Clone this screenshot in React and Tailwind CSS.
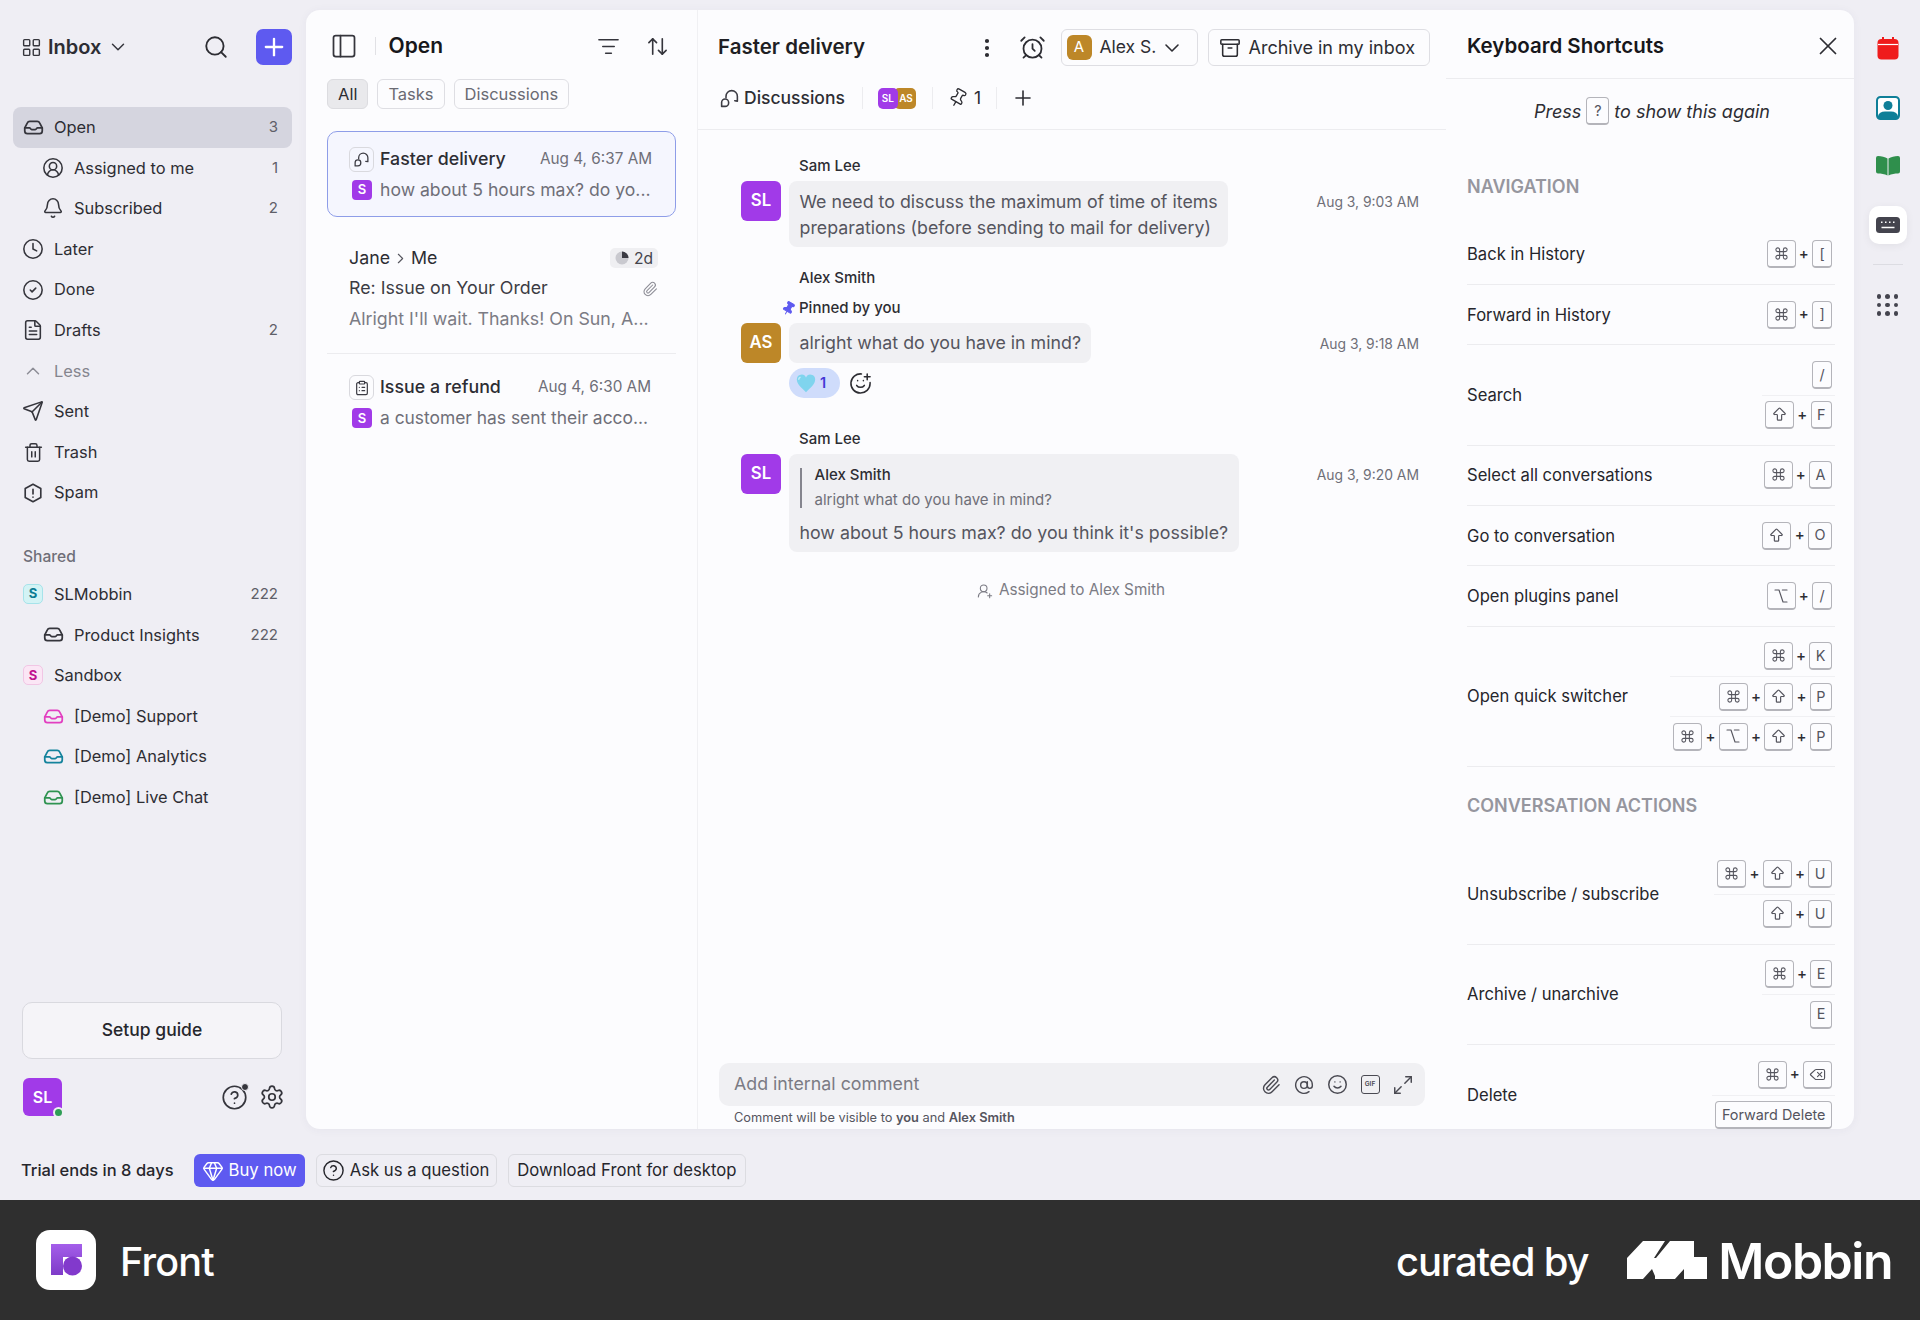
import React from 'react';
import {
    LayoutGrid, ChevronDown, ChevronUp, ChevronRight, Search, Plus, CircleUserRound, Bell, Clock, CircleCheck,
    FileText, Send, Trash2, PanelLeft, ListFilter, ArrowUpDown, ClipboardList, Paperclip, EllipsisVertical,
    AlarmClock, Archive, Pin, SmilePlus, Smile, AtSign, Maximize2, UserRoundPlus, CircleHelp, Settings, Gem, X,
    Command, ArrowBigUp, Option, Delete,
} from 'lucide-react';

const InboxIcon = ({ size = 21, className = '' }) => (
    <svg width={size} height={size} viewBox="0 0 24 24" fill="none" stroke="currentColor" strokeWidth="2" strokeLinejoin="round" strokeLinecap="round" className={className}>
        <path d="M2 12.5 5 6.8A3 3 0 0 1 7.7 5h8.6A3 3 0 0 1 19 6.8l3 5.7V16a3 3 0 0 1-3 3H5a3 3 0 0 1-3-3z" />
        <path d="M2 12.5h5.5c.8 0 1.2 1.8 2.5 1.8h4c1.3 0 1.7-1.8 2.5-1.8H22" />
    </svg>
);

const HexAlert = ({ size = 22 }) => (
    <svg width={size} height={size} viewBox="0 0 24 24" fill="none" stroke="currentColor" strokeWidth="1.8" strokeLinejoin="round" strokeLinecap="round">
        <path d="M12 2.5 20.500 7v10L12 21.500 3.500 17V7z" />
        <path d="M12 8v5M12 16.500v.1" />
    </svg>
);

const DiscussionIcon = ({ size = 18 }) => (
    <svg width={size} height={size} viewBox="0 0 24 24" fill="none" stroke="currentColor" strokeWidth="1.8" strokeLinejoin="round" strokeLinecap="round">
        <path d="M8 11V9.500a6.500 6.500 0 0 1 13 0V15l-3-.5" />
        <path d="M3 21v-4.500a4 4 0 0 1 8 0V17a4 4 0 0 1-4 4z" />
    </svg>
);

const HeartIcon = () => (
    <svg width="22" height="22" viewBox="0 0 24 24">
        <path d="M12 22C6 16.500 2 13 2 8a5.200 5.200 0 0 1 10-2 5.200 5.200 0 0 1 10 2c0 5-4 8.500-10 14z" fill="#7fd4ee" />
        <path d="M6 5.500a3 3 0 0 0-2 3" stroke="#c4eefa" strokeWidth="1.500" fill="none" />
    </svg>
);

const Pie = () => (
    <svg width="14" height="14" viewBox="0 0 14 14">
        <circle cx="7" cy="7" r="6.500" fill="#c9c9cf" />
        <path d="M7 7V.5A6.500 6.500 0 0 1 13.500 7z" fill="#3a3a42" />
    </svg>
);

const GifIcon = () => (
    <span className="flex h-[19px] w-[19px] items-center justify-center rounded-[3px] border-[1.500px] border-[#4a4a52] text-[6.500px] font-semibold leading-none text-[#4a4a52]">GIF</span>
);

const FrontMark = () => (
    <svg width="60" height="60" viewBox="0 0 60 60">
        <defs>
            <linearGradient id="frontGrad" x1="0" y1="0" x2="0" y2="1">
                <stop offset="0" stopColor="#a45eea" />
                <stop offset="1" stopColor="#7e3bc8" />
            </linearGradient>
        </defs>
        <path d="M15 14h31v13H27v18H15z" fill="url(#frontGrad)" />
        <circle cx="36.500" cy="36" r="9.500" fill="#8239cc" />
    </svg>
);

const MobbinMark = () => (
    <svg width="80" height="38" viewBox="0 0 80 38" fill="#fff">
        <path d="M0 38V17L16 0h22L27 17l2 0 14-17h24v16h13v22H57V28l-9 10H28v-3l-3-7-9 10z" />
    </svg>
);

const CalendarIcon = () => (
    <svg width="22" height="24" viewBox="0 0 22 24">
        <rect x="0.500" y="3" width="21" height="20.500" rx="4" fill="#ef1c1c" />
        <path d="M1 8.500h20" stroke="#fff" strokeWidth="1.200" />
        <path d="M6 1v4M16 1v4" stroke="#ef1c1c" strokeWidth="2" />
    </svg>
);

const ContactIcon = () => (
    <svg width="24" height="24" viewBox="0 0 24 24">
        <rect x="1" y="1" width="22" height="22" rx="3.500" fill="#fff" stroke="#0f7f98" strokeWidth="2" />
        <circle cx="12" cy="9.500" r="4.500" fill="#0f7f98" />
        <path d="M2 23v-3a7 5 0 0 1 7-4.500h6a7 5 0 0 1 7 4.500v3z" fill="#0f7f98" />
    </svg>
);

const BookIcon = () => (
    <svg width="24" height="20" viewBox="0 0 24 20" fill="#2f8f4c">
        <path d="M11.500 2.500v17c-3-1.500-6.500-2-9.500-2a2 2 0 0 1-2-2V2a2 2 0 0 1 2-2c3.500 0 7 1 9.500 2.500z" />
        <path d="M12.500 2.500v17c3-1.500 6.500-2 9.500-2a2 2 0 0 0 2-2V2a2 2 0 0 0-2-2c-3.500 0-7 1-9.500 2.500z" />
    </svg>
);

const KeyboardIcon = () => (
    <svg width="24" height="16" viewBox="0 0 24 16">
        <rect width="24" height="16" rx="3.500" fill="#44444e" />
        <path d="M5 5.200h1.500M9 5.200h1.500M13 5.200h1.500M17 5.200h1.500" stroke="#fff" strokeWidth="1.400" />
        <path d="M5.500 10.500h13" stroke="#fff" strokeWidth="1.500" />
    </svg>
);

const DotsGrid = () => (
    <div className="grid grid-cols-3 gap-[4px]">
        {Array.from({ length: 9 }).map((_, i) => (
            <span key={i} className="h-[4.500px] w-[4.500px] rounded-full bg-[#44444e]"></span>
        ))}
    </div>
);

const mainNav = [
    { label: 'Open', icon: <InboxIcon />, count: 3, active: true },
    { label: 'Assigned to me', icon: <CircleUserRound size={22} strokeWidth={1.7} />, count: 1, sub: true },
    { label: 'Subscribed', icon: <Bell size={22} strokeWidth={1.7} />, count: 2, sub: true },
    { label: 'Later', icon: <Clock size={22} strokeWidth={1.7} /> },
    { label: 'Done', icon: <CircleCheck size={22} strokeWidth={1.7} /> },
    { label: 'Drafts', icon: <FileText size={22} strokeWidth={1.7} />, count: 2 },
    { label: 'Less', icon: <ChevronUp size={24} strokeWidth={1.6} />, muted: true },
    { label: 'Sent', icon: <Send size={22} strokeWidth={1.7} /> },
    { label: 'Trash', icon: <Trash2 size={21} strokeWidth={1.7} /> },
    { label: 'Spam', icon: <HexAlert /> },
];

const NavRow = ({ item }) => (
    <div className={`flex h-[40.600px] items-center rounded-lg pr-[14px] ${item.active ? 'bg-[#d5d5df]' : ''} ${item.sub ? 'pl-[29px]' : 'pl-[9px]'}`}>
        <span className={`flex w-[22px] shrink-0 justify-center ${item.muted ? 'text-[#8d8d96]' : item.color || 'text-[#35353c]'}`}>{item.icon}</span>
        <span className={`ml-[10px] flex-1 text-[16.400px] ${item.muted ? 'text-[#85858e]' : 'text-[#2d2d33]'}`}>{item.label}</span>
        {item.count && <span className="text-[15px] text-[#5f5f68]">{item.count}</span>}
    </div>
);

const SharedBadge = ({ className }) => (
    <span className={`flex h-[20px] w-[20px] items-center justify-center rounded-[5px] border text-[13px] font-bold ${className}`}>S</span>
);

const Sidebar = () => (
    <aside className="flex w-[306px] shrink-0 flex-col pl-[13px] pr-[14px]">
        <div className="flex h-[36px] mt-[29px] items-center pl-[8px]">
            <LayoutGrid size={21} strokeWidth={1.6} className="text-[#35353c]" />
            <span className="ml-[6px] text-[20px] font-semibold text-[#2d2d33]">Inbox</span>
            <ChevronDown size={22} strokeWidth={1.6} className="ml-[6px] text-[#35353c]" />
            <Search size={26} strokeWidth={1.7} className="ml-auto mr-[27px] text-[#2d2d33]" />
            <span className="flex h-[36px] w-[36px] items-center justify-center rounded-[7px] bg-[#5e5af0] text-white">
                <Plus size={28} strokeWidth={2} />
            </span>
        </div>
        <nav className="mt-[42px]">
            {mainNav.map((item) => <NavRow key={item.label} item={item} />)}
        </nav>
        <p className="ml-[10px] mt-[34px] text-[15.600px] font-medium leading-[20px] text-[#6f6f78]">Shared</p>
        <div className="mt-[7px]">
            <NavRow item={{ label: 'SLMobbin', icon: <SharedBadge className="border-[#a6e3ea] bg-[#d3f3f5] text-[#0d7c93]" />, count: 222 }} />
            <NavRow item={{ label: 'Product Insights', icon: <InboxIcon />, count: 222, sub: true }} />
            <NavRow item={{ label: 'Sandbox', icon: <SharedBadge className="border-[#f1c6e4] bg-[#fbe6f5] text-[#c0128f]" /> }} />
            <NavRow item={{ label: '[Demo] Support', icon: <InboxIcon />, sub: true, color: 'text-[#e23fc0]' }} />
            <NavRow item={{ label: '[Demo] Analytics', icon: <InboxIcon />, sub: true, color: 'text-[#14839c]' }} />
            <NavRow item={{ label: '[Demo] Live Chat', icon: <InboxIcon />, sub: true, color: 'text-[#2f9351]' }} />
        </div>
        <div className="mt-auto ml-[9px] mr-[10px] flex h-[57px] items-center justify-center rounded-[10px] border-[1.500px] border-[#d9d9df] bg-[#f5f4f8] text-[17.500px] font-medium text-[#26262c]">
            Setup guide
        </div>
        <div className="ml-[10px] mr-[7px] mb-[13px] mt-[19px] flex items-center">
            <span className="relative flex h-[38px] w-[39px] items-center justify-center rounded-[6px] bg-[#a13ae8] text-[16px] font-semibold text-white">
                SL
                <span className="absolute -bottom-[2px] -right-[2px] h-[11px] w-[11px] rounded-full border-2 border-[#efeef4] bg-[#2f9e56]"></span>
            </span>
            <span className="relative ml-auto mr-[11px] text-[#35353c]">
                <CircleHelp size={27} strokeWidth={1.5} />
                <span className="absolute -right-[1px] -top-[1px] h-[8px] w-[8px] rounded-full border border-[#efeef4] bg-[#35353c]"></span>
            </span>
            <Settings size={26} strokeWidth={1.6} className="text-[#35353c]" />
        </div>
    </aside>
);

const Chip = ({ label, active }) => (
    <span className={`flex h-[30px] items-center rounded-[6px] border-[1.500px] px-[10px] text-[16.500px] ${active ? 'border-[#dcdce0] bg-[#e9e9ec] text-[#2d2d33]' : 'border-[#dedee3] text-[#6a6a73]'}`}>{label}</span>
);

const IconBox = ({ children }) => (
    <span className="flex h-[25px] w-[25px] shrink-0 items-center justify-center rounded-[6px] border border-[#d9d9de] text-[#3c3c44]">{children}</span>
);

const PurpleS = () => (
    <span className="ml-[3px] mr-[8px] flex h-[20px] w-[20px] shrink-0 items-center justify-center rounded-[4px] bg-[#a13ae8] text-[13px] font-semibold text-white">S</span>
);

const ConversationList = () => (
    <section className="flex w-[392px] shrink-0 flex-col border-r border-[#f0f0f3] px-[21px]">
        <div className="flex h-[69px] items-center pl-[2.500px] pr-[7.500px] pt-[3px]">
            <PanelLeft size={28} strokeWidth={1.5} className="text-[#35353c]" />
            <span className="ml-[17px] mr-[13px] h-[18px] w-px bg-[#e1e1e5]"></span>
            <span className="text-[21px] font-semibold text-[#17171b]">Open</span>
            <ListFilter size={23} strokeWidth={1.6} className="ml-auto mr-[26px] text-[#35353c]" />
            <ArrowUpDown size={23} strokeWidth={1.7} className="text-[#35353c]" />
        </div>
        <div className="flex gap-[9px]">
            <Chip label="All" active />
            <Chip label="Tasks" />
            <Chip label="Discussions" />
        </div>
        <div className="mt-[22px] h-[86px] rounded-[10px] border-[1.500px] border-[#8e9de8] bg-[#f5f6fe] pl-[21px] pr-[21px] pt-[12px]">
            <div className="flex h-[30.500px] items-center pr-[2px]">
                <IconBox><DiscussionIcon size={17} /></IconBox>
                <span className="ml-[6px] flex-1 text-[17.800px] font-medium text-[#2d2d33]">Faster delivery</span>
                <span className="text-[15.300px] text-[#6f6f78]">Aug 4, 6:37 AM</span>
            </div>
            <div className="flex h-[30.500px] items-center">
                <PurpleS />
                <span className="whitespace-nowrap text-[17.600px] text-[#6f6f78]">how about 5 hours max? do yo...</span>
            </div>
        </div>
        <div className="border-b border-[#ececef] pb-[18px] pl-[22px] pr-[18px] pt-[26px]">
            <div className="flex h-[30.500px] items-center text-[17.800px] text-[#2d2d33]">
                <span>Jane</span>
                <ChevronRight size={17} strokeWidth={1.6} className="mx-[2px] text-[#55555d]" />
                <span className="flex-1">Me</span>
                <span className="flex h-[20px] items-center gap-[5px] rounded-[5px] bg-[#efeff2] px-[5px] text-[15.600px] text-[#44444c]"><Pie />2d</span>
            </div>
            <div className="flex h-[30.500px] items-center justify-between text-[17.800px] text-[#3c3c44]">
                <span>Re: Issue on Your Order</span>
                <Paperclip size={16} strokeWidth={1.6} className="text-[#8d8d96]" />
            </div>
            <div className="flex h-[30.500px] items-center text-[17.800px] text-[#7b7b84]">
                <span className="whitespace-nowrap">Alright I'll wait. Thanks! On Sun, A...</span>
            </div>
        </div>
        <div className="pl-[22px] pr-[22px] pt-[19px]">
            <div className="flex h-[30.500px] items-center pr-[3px]">
                <IconBox><ClipboardList size={16} strokeWidth={1.8} /></IconBox>
                <span className="ml-[6px] flex-1 text-[17.800px] font-medium text-[#2d2d33]">Issue a refund</span>
                <span className="text-[15.300px] text-[#6f6f78]">Aug 4, 6:30 AM</span>
            </div>
            <div className="flex h-[30.500px] items-center">
                <PurpleS />
                <span className="whitespace-nowrap text-[17.400px] text-[#6f6f78]">a customer has sent their acco...</span>
            </div>
        </div>
    </section>
);

const Avatar = ({ initials, bg }) => (
    <span className={`flex h-[40px] w-[40px] shrink-0 items-center justify-center rounded-[6px] text-[16.800px] font-semibold text-white ${bg}`}>{initials}</span>
);

const MessageDate = ({ children }) => (
    <span className="ml-auto flex h-[40px] items-center pt-[2px] text-[13.900px] text-[#6f6f78]">{children}</span>
);

const Name = ({ children }) => (
    <p className="pl-[58px] text-[15px] font-medium leading-[20px] text-[#2d2d33]">{children}</p>
);

const Bubble = ({ children, className = '' }) => (
    <div className={`ml-[8px] rounded-[8px] bg-[#f0f0f3] text-[17.800px] leading-[26px] text-[#55555e] ${className}`}>{children}</div>
);

const DetailDivider = () => <span className="block h-[22px] w-px bg-[#ececef]"></span>;

const ConversationPane = () => (
    <section className="flex w-[748px] shrink-0 flex-col">
        <div className="h-[120px] border-b border-[#ececef] pl-[20px] pr-[16px] pt-[19px]">
            <div className="flex h-[37px] items-center">
                <span className="w-[257px] shrink-0 whitespace-nowrap text-[20.500px] font-semibold text-[#1f1f24]">Faster delivery</span>
                <EllipsisVertical size={24} strokeWidth={2.2} className="shrink-0 text-[#2d2d33]" />
                <AlarmClock size={27} strokeWidth={1.6} className="ml-[20px] shrink-0 text-[#2d2d33]" />
                <span className="ml-[15px] flex h-[37px] w-[137px] shrink-0 items-center rounded-[6px] border-[1.500px] border-[#dedee3] pl-[4.500px]">
                    <span className="flex h-[25px] w-[25px] items-center justify-center rounded-[6px] bg-[#bd8728] text-[15px] text-white">A</span>
                    <span className="ml-[8px] text-[17.500px] text-[#2d2d33]">Alex S.</span>
                    <ChevronDown size={24} strokeWidth={1.6} className="ml-[4px] text-[#2d2d33]" />
                </span>
                <span className="ml-[10px] flex h-[37px] w-[222px] shrink-0 items-center rounded-[6px] border-[1.500px] border-[#dedee3] pl-[9.500px]">
                    <Archive size={22} strokeWidth={1.7} className="text-[#2d2d33]" />
                    <span className="ml-[8px] text-[18px] text-[#2d2d33]">Archive in my inbox</span>
                </span>
            </div>
            <div className="mt-[21px] flex h-[22px] items-center">
                <span className="ml-[1px] text-[#3c3c44]"><DiscussionIcon size={21} /></span>
                <span className="ml-[4px] text-[17.500px] font-medium text-[#2d2d33]">Discussions</span>
                <span className="ml-[17px]"><DetailDivider /></span>
                <span className="relative ml-[15px] flex h-[21px] w-[38px]">
                    <span className="absolute left-[16px] flex h-[21px] w-[22px] items-center justify-end rounded-[5px] bg-[#bd8728] pr-[3px] text-[10px] font-semibold text-white">AS</span>
                    <span className="absolute left-0 flex h-[21px] w-[20px] items-center justify-center rounded-[5px] bg-[#a13ae8] text-[10px] font-semibold text-white">SL</span>
                </span>
                <span className="ml-[16px]"><DetailDivider /></span>
                <Pin size={20} strokeWidth={1.6} className="ml-[15px] rotate-[30deg] text-[#2d2d33]" />
                <span className="ml-[6px] text-[17.500px] text-[#2d2d33]">1</span>
                <span className="ml-[15px]"><DetailDivider /></span>
                <Plus size={24} strokeWidth={1.6} className="ml-[14px] text-[#2d2d33]" />
            </div>
        </div>
        <div className="pl-[43px] pr-[27px] pt-[26px]">
            <Name>Sam Lee</Name>
            <div className="mt-[5px] flex items-start">
                <Avatar initials="SL" bg="bg-[#a13ae8]" />
                <Bubble className="px-[10.500px] pb-[6px] pt-[8px]">
                    We need to discuss the maximum of time of items<br />preparations (before sending to mail for delivery)
                </Bubble>
                <MessageDate>Aug 3, 9:03 AM</MessageDate>
            </div>
            <div className="mt-[21px]">
                <Name>Alex Smith</Name>
            </div>
            <div className="mt-[10px] flex h-[20px] items-center pl-[40px]">
                <Pin size={15} fill="#5e5af0" strokeWidth={1.5} className="rotate-[30deg] text-[#5e5af0]" />
                <span className="ml-[3px] text-[15px] font-medium text-[#2d2d33]">Pinned by you</span>
            </div>
            <div className="mt-[5px] flex items-start">
                <Avatar initials="AS" bg="bg-[#bd8728]" />
                <Bubble className="px-[10.500px] py-[7px]">alright what do you have in mind?</Bubble>
                <MessageDate>Aug 3, 9:18 AM</MessageDate>
            </div>
            <div className="ml-[48px] mt-[5px] flex items-center">
                <span className="flex h-[30px] w-[51px] items-center gap-[3px] rounded-full bg-[#cfdcfb] pl-[6px] text-[14.500px] font-semibold text-[#4438d6]"><HeartIcon />1</span>
                <SmilePlus size={23} strokeWidth={1.6} className="ml-[9px] text-[#2d2d33]" />
            </div>
            <div className="mt-[31px]">
                <Name>Sam Lee</Name>
            </div>
            <div className="mt-[5px] flex items-start">
                <Avatar initials="SL" bg="bg-[#a13ae8]" />
                <Bubble className="px-[10.500px] pb-[5.500px] pt-[11px]">
                    <div className="flex items-center gap-[13px]">
                        <span className="h-[40px] w-[2px] bg-[#85858e]"></span>
                        <div>
                            <p className="text-[15px] font-medium leading-[20px] text-[#2d2d33]">Alex Smith</p>
                            <p className="mt-[5px] text-[15px] leading-[20px] text-[#6f6f78]">alright what do you have in mind?</p>
                        </div>
                    </div>
                    <p className="mt-[10px]">how about 5 hours max? do you think it's possible?</p>
                </Bubble>
                <MessageDate>Aug 3, 9:20 AM</MessageDate>
            </div>
            <div className="mt-[29px] flex h-[20px] items-center justify-center gap-[6px] pr-[18px] text-[15.300px] text-[#7b7b84]">
                <UserRoundPlus size={16} strokeWidth={1.6} />
                <span>Assigned to Alex Smith</span>
            </div>
        </div>
        <div className="mt-auto px-[21px] pb-[2px]">
            <div className="flex h-[43px] items-center rounded-[10px] bg-[#f0f0f3] pl-[15px] pr-[5.500px] text-[#4a4a52]">
                <span className="flex-1 text-[17.800px] text-[#7b7b84]">Add internal comment</span>
                <span className="flex w-[33px] justify-center"><Paperclip size={20} strokeWidth={1.7} /></span>
                <span className="flex w-[33px] justify-center"><AtSign size={20} strokeWidth={1.7} /></span>
                <span className="flex w-[33px] justify-center"><Smile size={21} strokeWidth={1.7} /></span>
                <span className="flex w-[33px] justify-center"><GifIcon /></span>
                <span className="flex w-[33px] justify-center"><Maximize2 size={22} strokeWidth={1.6} /></span>
            </div>
            <p className="mt-[3px] pl-[15px] text-[12.800px] leading-[18px] text-[#55555e]">
                Comment will be visible to <b className="font-semibold">you</b> and <b className="font-semibold">Alex Smith</b>
            </p>
        </div>
    </section>
);

const glyphs = {
    cmd: <Command size={15} strokeWidth={1.7} />,
    shift: <ArrowBigUp size={17} strokeWidth={1.7} />,
    opt: <Option size={16} strokeWidth={1.7} />,
    del: <Delete size={17} strokeWidth={1.6} />,
};

const Key = ({ value }) => {
    const glyph = glyphs[value];
    return (
        <span className={`flex h-[28px] min-w-[20px] items-center justify-center rounded-[4px] border-[1.500px] border-b-2 border-[#b4b4ba] text-[14.400px] text-[#55555e] ${glyph ? 'w-[29px]' : 'px-[5.500px]'}`}>
            {glyph || value}
        </span>
    );
};

const Combo = ({ keys }) => (
    <div className="flex h-[40px] items-center justify-end gap-[3px] border-t border-[#f0f0f3] px-[3px] first:border-t-0">
        {keys.map((k, i) => (
            <React.Fragment key={i}>
                {i > 0 && <span className="w-[10.500px] text-center text-[15px] font-medium text-[#2d2d33]">+</span>}
                <Key value={k} />
            </React.Fragment>
        ))}
    </div>
);

const ShortcutRow = ({ label, combos }) => (
    <div className="flex items-center justify-between border-b border-[#ececef] py-[9.700px]">
        <span className="pt-[1px] text-[16.600px] text-[#26262c]">{label}</span>
        <div className="flex flex-col">
            {combos.map((c, i) => <Combo key={i} keys={c} />)}
        </div>
    </div>
);

const navShortcuts = [
    { label: 'Back in History', combos: [['cmd', '[']] },
    { label: 'Forward in History', combos: [['cmd', ']']] },
    { label: 'Search', combos: [['/'], ['shift', 'F']] },
    { label: 'Select all conversations', combos: [['cmd', 'A']] },
    { label: 'Go to conversation', combos: [['shift', 'O']] },
    { label: 'Open plugins panel', combos: [['opt', '/']] },
    { label: 'Open quick switcher', combos: [['cmd', 'K'], ['cmd', 'shift', 'P'], ['cmd', 'opt', 'shift', 'P']] },
];

const actionShortcuts = [
    { label: 'Unsubscribe / subscribe', combos: [['cmd', 'shift', 'U'], ['shift', 'U']] },
    { label: 'Archive / unarchive', combos: [['cmd', 'E'], ['E']] },
    { label: 'Delete', combos: [['cmd', 'del'], ['Forward Delete']] },
];

const ShortcutsPanel = () => (
    <section className="flex min-w-0 flex-1 flex-col overflow-hidden">
        <div className="flex h-[69px] shrink-0 items-center justify-between border-b border-[#ececef] pl-[21px] pr-[11px] pt-[4px]">
            <span className="text-[20.500px] font-semibold text-[#17171b]">Keyboard Shortcuts</span>
            <X size={30} strokeWidth={1.4} className="text-[#2d2d33]" />
        </div>
        <div className="pl-[21px] pr-[19px]">
            <div className="mt-[18px] flex items-center justify-center gap-[5px] pl-[2px] text-[18px] italic text-[#2d2d33]">
                <span>Press</span>
                <span className="flex h-[28px] w-[23px] items-center justify-center rounded-[4px] border-[1.500px] border-b-2 border-[#b4b4ba] text-[14.400px] not-italic text-[#55555e]">?</span>
                <span>to show this again</span>
            </div>
            <h3 className="mt-[49.500px] text-[18px] font-semibold leading-[24px] text-[#96969e]">NAVIGATION</h3>
            <div className="mt-[26px]">
                {navShortcuts.map((s) => <ShortcutRow key={s.label} {...s} />)}
            </div>
            <h3 className="mt-[27px] text-[18px] font-semibold leading-[24px] text-[#96969e]">CONVERSATION ACTIONS</h3>
            <div className="mt-[26px]">
                {actionShortcuts.map((s) => <ShortcutRow key={s.label} {...s} />)}
            </div>
        </div>
    </section>
);

const RightRail = () => (
    <aside className="flex flex-1 flex-col items-center pl-[1px] pt-[36px]">
        <CalendarIcon />
        <span className="mt-[36px]"><ContactIcon /></span>
        <span className="mt-[36px]"><BookIcon /></span>
        <span className="mt-[30px] flex h-[38px] w-[38px] items-center justify-center rounded-[10px] bg-white shadow-[0_2px_8px_rgba(0,0,0,0.06)]"><KeyboardIcon /></span>
        <span className="mt-[20px] h-px w-[30px] bg-[#dcdce2]"></span>
        <span className="mt-[29px]"><DotsGrid /></span>
    </aside>
);

const TrialButton = ({ children, className = '' }) => (
    <span className={`flex h-[33px] items-center rounded-[6px] border-[1.500px] border-[#dcdce1] text-[16.700px] text-[#26262c] ${className}`}>{children}</span>
);

export default function App() {
    return (
        <div className="flex h-[1320px] w-[1920px] flex-col overflow-hidden bg-[#efeef4] font-[family-name:Inter,sans-serif]">
            <div className="flex h-[1129px] shrink-0">
                <Sidebar />
                <main className="mt-[10px] flex w-[1548px] shrink-0 overflow-hidden rounded-[14px] bg-[#fcfcfe] shadow-[0_1px_10px_rgba(60,60,90,0.05)]">
                    <ConversationList />
                    <ConversationPane />
                    <ShortcutsPanel />
                </main>
                <RightRail />
            </div>
            <div className="flex h-[71px] shrink-0 items-center pl-[21px] pt-[12px]">
                <span className="text-[16.500px] font-medium text-[#26262c]">Trial ends in 8 days</span>
                <span className="ml-[20px] flex h-[33px] items-center gap-[5px] rounded-[6px] bg-[#5e5af0] pl-[8px] pr-[8px] text-[16.700px] text-white">
                    <Gem size={22} strokeWidth={1.6} />Buy now
                </span>
                <span className="ml-[11px]">
                    <TrialButton className="pl-[5px] pr-[7px]"><CircleHelp size={23} strokeWidth={1.5} className="mr-[5px]" />Ask us a question</TrialButton>
                </span>
                <span className="ml-[11px]"><TrialButton className="px-[8px]">Download Front for desktop</TrialButton></span>
            </div>
            <footer className="flex h-[120px] shrink-0 items-center bg-[#2f2f2f] pl-[36px] pr-[28px] text-white">
                <span className="flex h-[60px] w-[60px] items-center justify-center rounded-[14px] bg-white"><FrontMark /></span>
                <span className="ml-[24px] pt-[5px] text-[39.500px] font-medium tracking-[-0.02em]">Front</span>
                <span className="ml-auto pt-[3px] text-[40px] font-medium tracking-[-0.03em]">curated by</span>
                <span className="ml-[39px]"><MobbinMark /></span>
                <span className="ml-[11px] pt-[1px] text-[50px] font-semibold leading-none tracking-[-0.03em]">Mobbin</span>
            </footer>
        </div>
    );
}
